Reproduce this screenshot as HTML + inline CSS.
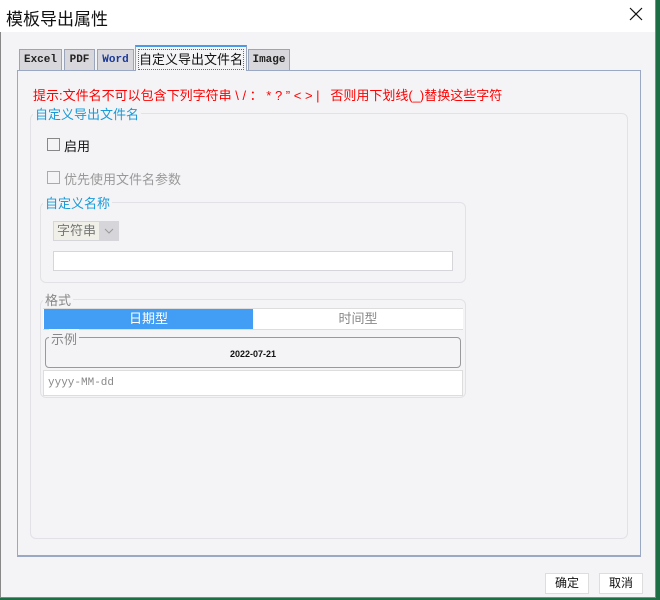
<!DOCTYPE html>
<html><head><meta charset="utf-8"><style>
*{margin:0;padding:0;box-sizing:border-box}
body{width:660px;height:600px;background:#1e6e45;position:relative;overflow:hidden;font-family:"Liberation Sans","Noto Sans CJK SC",sans-serif;font-size:12px}
.a{position:absolute}
#dlg{left:0;top:0;width:656px;height:598px;background:#f4f4f6;border:1px solid #888;border-top:none}
#title{left:0;top:0;width:655px;height:32px;background:#fff}
.tab{position:absolute;top:49px;height:21px;background:#d8d8dc;border:1px solid #9aa4bb;border-bottom:none;font-family:"Liberation Mono",monospace;font-weight:bold;font-size:11px;text-align:center;line-height:20px;color:#222}
fieldset{position:absolute;border:1px solid #e2e2e6;border-radius:6px}
legend{font-size:13px;padding:0 2px;margin-left:2px}
.cb{position:absolute;width:13px;height:13px;border:1px solid #888;background:#f4f4f6}
</style></head><body>
<div class="a" id="dlg"></div>
<div class="a" id="title"></div>
<div class="a" style="left:6px;top:5px;font-size:17px;color:#111">模板导出属性</div>
<svg class="a" style="left:629px;top:7px" width="14" height="14"><path d="M1 1L13 13M13 1L1 13" stroke="#111" stroke-width="1.2"/></svg>
<div class="a" style="left:17px;top:70px;width:624px;height:487px;border:1px solid #9aa8c4;border-bottom:2px solid #9aa8c4;background:#f4f4f6"></div>
<div class="tab" style="left:19px;width:43px">Excel</div>
<div class="tab" style="left:64px;width:31px">PDF</div>
<div class="tab" style="left:97px;width:37px;color:#1a3a9a">Word</div>
<div class="tab" style="left:248px;width:42px">Image</div>
<div class="a" style="left:135px;top:45px;width:112px;height:26px;background:#f4f4f6;border:1px solid #9aa4bb;border-top:2px solid #4a9ae8;border-bottom:none"></div>
<div class="a" style="left:138px;top:49px;width:106px;height:21px;border:1px dotted #667;font-size:13px;text-align:center;line-height:19px;color:#111">自定义导出文件名</div>
<div class="a" style="left:33px;top:85px;color:#f00;font-size:13px;white-space:nowrap">提示:文件名不可以包含下列字符串 \ / ： * ? ” &lt; &gt; |&nbsp;&nbsp; 否则用下划线(_)替换这些字符</div>
<fieldset style="left:30px;top:104px;width:598px;height:435px"><legend style="color:#1a9ad8">自定义导出文件名</legend></fieldset>
<div class="cb" style="left:47px;top:138px"></div>
<div class="a" style="left:64px;top:136px;font-size:13px;color:#111">启用</div>
<div class="cb" style="left:47px;top:171px;border-color:#aaa"></div>
<div class="a" style="left:64px;top:169px;font-size:13px;color:#999">优先使用文件名参数</div>
<fieldset style="left:40px;top:193px;width:426px;height:90px"><legend style="color:#1a9ad8">自定义名称</legend></fieldset>
<div class="a" style="left:53px;top:221px;width:66px;height:20px;background:#d6d6da"></div>
<div class="a" style="left:54px;top:222px;width:45px;height:18px;background:#f0f0e8;color:#777;font-size:13px;text-align:center;line-height:18px">字符串</div>
<svg class="a" style="left:104px;top:228px" width="10" height="6"><path d="M1 1L5 5L9 1" stroke="#999" fill="none"/></svg>
<div class="a" style="left:53px;top:251px;width:400px;height:20px;background:#fff;border:1px solid #d6d6da"></div>
<fieldset style="left:40px;top:290px;width:426px;height:108px"><legend style="color:#888">格式</legend></fieldset>
<div class="a" style="left:43px;top:308px;width:420px;height:22px;background:#fff;border-top:1px solid #ddd;border-bottom:1px solid #ddd"></div>
<div class="a" style="left:44px;top:309px;width:209px;height:20px;background:#429df4;color:#fff;font-size:13px;text-align:center;line-height:20px">日期型</div>
<div class="a" style="left:253px;top:309px;width:210px;height:20px;color:#888;font-size:13px;text-align:center;line-height:20px">时间型</div>
<div class="a" style="left:45px;top:337px;width:416px;height:31px;border:1px solid #999;border-radius:4px"></div>
<div class="a" style="left:49px;top:329px;background:#f4f4f6;color:#888;font-size:13px;padding:0 2px">示例</div>
<div class="a" style="left:45px;top:349px;width:416px;text-align:center;font-size:9px;font-weight:bold;color:#111">2022-07-21</div>
<div class="a" style="left:43px;top:370px;width:420px;height:26px;background:#fff;border:1px solid #ddd;font-family:'Liberation Mono',monospace;color:#888;font-size:11px;line-height:24px;padding-left:4px">yyyy-MM-dd</div>
<div class="a" style="left:545px;top:573px;width:44px;height:21px;background:#fff;border:1px solid #ddd;font-size:12px;text-align:center;line-height:19px;color:#111">确定</div>
<div class="a" style="left:599px;top:573px;width:44px;height:21px;background:#fff;border:1px solid #ddd;font-size:12px;text-align:center;line-height:19px;color:#111">取消</div>
</body></html>
